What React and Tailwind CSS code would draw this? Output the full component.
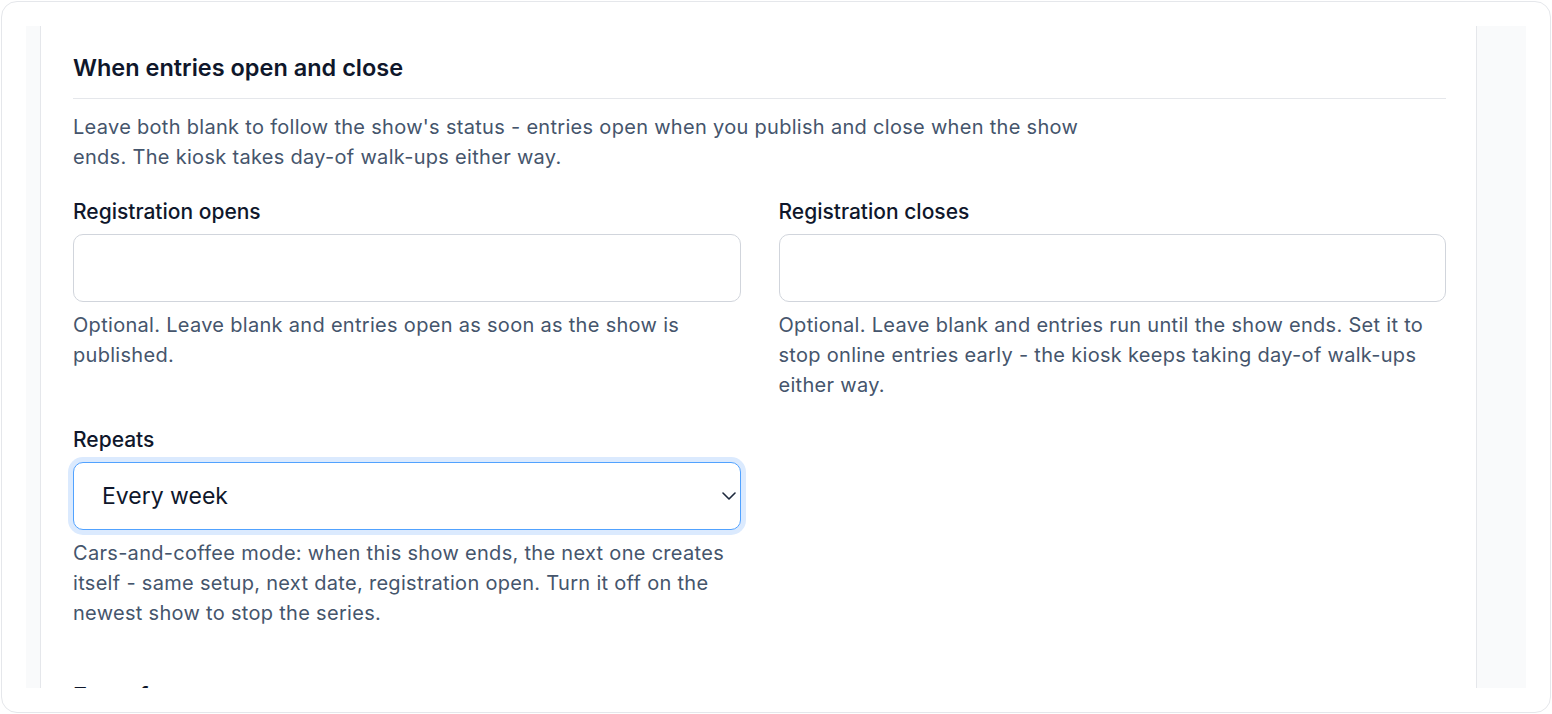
const font = { fontFamily: 'Inter, "Noto Sans", sans-serif' };

function Field({ label, help, children }) {
  return (
    <div className="flex flex-col">
      <label className="text-[21px] leading-[30px] font-medium text-slate-900">{label}</label>
      <div className="mt-[7px]">{children}</div>
      <p className="mt-2 text-[20px] leading-[30px] tracking-[0.3px] text-slate-600">{help}</p>
    </div>
  );
}

function Chevron() {
  return (
    <svg width="14" height="8" viewBox="0 0 14 8" fill="none" className="absolute right-[5px] top-1/2 -translate-y-1/2 text-slate-800">
      <path d="M1 1l6 6 6-6" stroke="currentColor" strokeWidth="1.6" strokeLinecap="round" strokeLinejoin="round" />
    </svg>
  );
}

export default function App() {
  return (
    <div className="h-[714px] bg-white p-px" style={font}>
      <div className="h-full rounded-2xl border border-gray-200 bg-white p-6">
        <div className="h-full overflow-hidden bg-gray-50 pl-[14px] pr-[49px]">
          <div className="h-full border-x border-gray-200 bg-white pl-8 pr-[30px] pt-[26px]">
            {/* Section heading */}
            <h2 className="border-b border-gray-200 pb-[14px] text-[23.5px] leading-[32px] font-semibold text-slate-900">
              When entries open and close
            </h2>
            <p className="mt-[13px] max-w-[1035px] text-[20px] leading-[30px] tracking-[0.3px] text-slate-600">
              Leave both blank to follow the show's status - entries open when you publish and close when the show ends. The kiosk takes day-of walk-ups either way.
            </p>

            <div className="mt-[25px] grid grid-cols-2 gap-x-[38px]">
              <Field
                label="Registration opens"
                help="Optional. Leave blank and entries open as soon as the show is published."
              >
                <input className="block h-[68px] w-full rounded-[10px] border border-gray-300 bg-white px-7 outline-none" />
              </Field>
              <Field
                label="Registration closes"
                help="Optional. Leave blank and entries run until the show ends. Set it to stop online entries early - the kiosk keeps taking day-of walk-ups either way."
              >
                <input className="block h-[68px] w-full rounded-[10px] border border-gray-300 bg-white px-7 outline-none" />
              </Field>
            </div>

            <div className="mt-[25px] grid grid-cols-2 gap-x-[38px]">
              <Field
                label="Repeats"
                help="Cars-and-coffee mode: when this show ends, the next one creates itself - same setup, next date, registration open. Turn it off on the newest show to stop the series."
              >
                <div className="relative">
                  <div className="flex h-[68px] w-full items-center rounded-[10px] border border-blue-400 bg-white pl-7 pr-3 text-[23px] text-slate-900 ring-[5px] ring-blue-100">
                    Every week
                  </div>
                  <Chevron />
                </div>
              </Field>
            </div>

            <h2 className="mt-[52px] text-[23.5px] leading-[32px] font-semibold text-slate-900">
              Entry fees
            </h2>
          </div>
        </div>
      </div>
    </div>
  );
}
